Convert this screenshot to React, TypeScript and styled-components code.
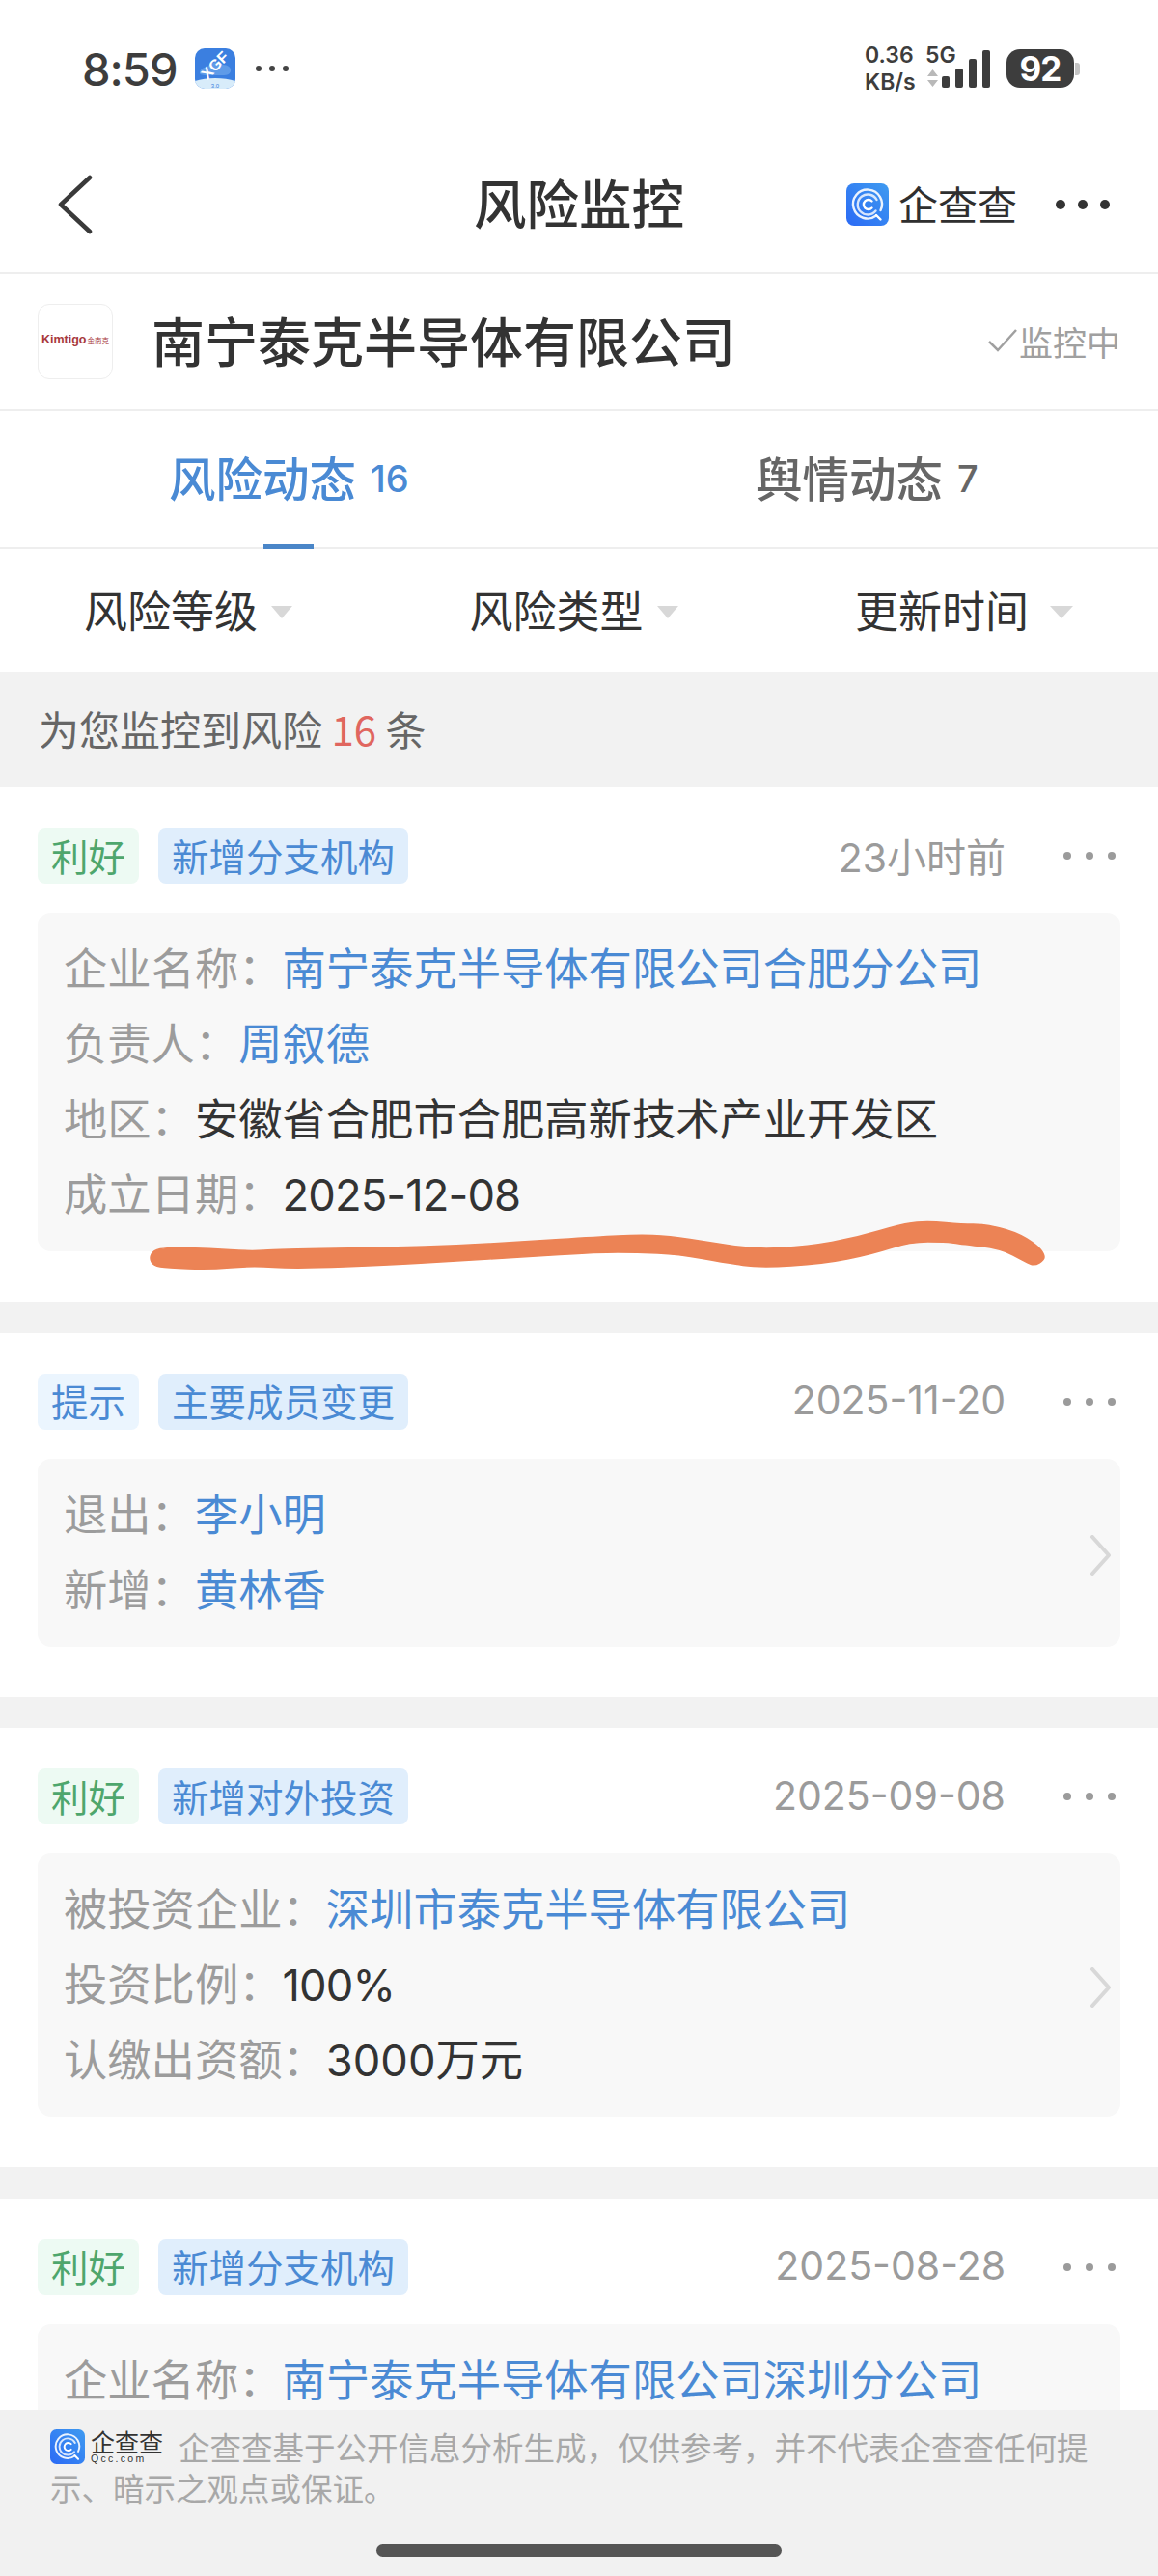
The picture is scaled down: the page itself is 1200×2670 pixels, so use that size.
import React from "react";
import styled, { createGlobalStyle } from "styled-components";

const cjk = `"Noto Sans CJK SC", "Noto Sans", sans-serif`;
const latin = `Inter, "Noto Sans CJK SC", sans-serif`;
const blue = "#4a8ad4";

const GlobalStyle = createGlobalStyle`
  html, body {
    margin: 0;
    padding: 0;
    background: #fff;
    font-family: ${cjk};
  }
  * {
    box-sizing: border-box;
  }
`;

const Page = styled.div`
  position: relative;
  width: 1200px;
  height: 2670px;
  overflow: hidden;
  background: #f2f2f2;
`;
const Header = styled.div`
  background: #fff;
`;

const StatusBar = styled.div`
  height: 142px;
  padding: 0 81px 0 85px;
  display: flex;
  align-items: center;
  color: #3d3d3d;
`;
const Clock = styled.div`
  font-family: Inter, sans-serif;
  font-size: 47px;
  font-weight: 500;
  letter-spacing: -1px;
  width: 117px;
`;
const StatusDots = styled.div`
  display: flex;
  gap: 8px;
  margin-left: 21px;
`;
const StatusDot = styled.span`
  width: 6px;
  height: 6px;
  border-radius: 50%;
  background: #444;
`;
const StatusRight = styled.div`
  margin-left: auto;
  display: flex;
  align-items: center;
`;
const Speed = styled.div`
  font-family: Inter, sans-serif;
  font-weight: 600;
  font-size: 23px;
  line-height: 28px;
  width: 63px;
  white-space: nowrap;
`;
const NetworkCol = styled.div`
  width: 17px;
  height: 56px;
  font-family: Inter, sans-serif;
  font-weight: 600;
  font-size: 23px;
  line-height: 28px;
  white-space: nowrap;
  svg {
    display: block;
    margin: 1px 0 0 2px;
  }
`;
const Battery = styled.div`
  margin-left: 17px;
  width: 70px;
  height: 40px;
  border-radius: 14px;
  background: #3d3d3d;
  color: #fff;
  font-family: Inter, sans-serif;
  font-weight: 700;
  font-size: 35px;
  letter-spacing: -1px;
  display: flex;
  align-items: center;
  justify-content: center;
`;
const BatteryTip = styled.div`
  width: 5px;
  height: 13px;
  margin-left: 1px;
  border-radius: 0 3px 3px 0;
  background: #c4c4c4;
`;

const NavBar = styled.div`
  height: 142px;
  padding: 0 50px;
  display: grid;
  grid-template-columns: 1fr auto 1fr;
  align-items: center;
  border-bottom: 2px solid #eeeeee;
`;
const BackIcon = styled.svg`
  margin-left: 10px;
`;
const NavTitle = styled.div`
  font-size: 54.5px;
  font-weight: 500;
  color: #333;
  line-height: 1;
  padding-bottom: 6px;
`;
const NavBrand = styled.div`
  display: flex;
  align-items: center;
  justify-content: flex-end;
`;
const BrandName = styled.div`
  margin-left: 10px;
  font-size: 41px;
  line-height: 1;
  color: #2f2f2f;
  padding-bottom: 3px;
`;
const MoreDots = styled.div<{ $size: number; $gap: number; $color: string }>`
  display: flex;
  gap: ${(p) => p.$gap}px;
  span {
    width: ${(p) => p.$size}px;
    height: ${(p) => p.$size}px;
    border-radius: 50%;
    background: ${(p) => p.$color};
  }
`;
const NavDots = styled(MoreDots)`
  margin-left: 40px;
`;

const CompanyRow = styled.div`
  height: 142px;
  padding: 0 39px;
  display: flex;
  align-items: center;
  border-bottom: 2px solid #eeeeee;
`;
const CompanyLogo = styled.div`
  width: 78px;
  height: 78px;
  border-radius: 12px;
  border: 1px solid #eeeeee;
  display: flex;
  align-items: baseline;
  justify-content: center;
  padding-top: 29px;
  color: #a8393c;
  font-family: "Liberation Sans", sans-serif;
  font-weight: 700;
  font-size: 12.5px;
  white-space: nowrap;
  small {
    font-family: ${cjk};
    font-size: 7.5px;
    font-weight: 400;
    margin-left: 1px;
  }
`;
const CompanyName = styled.div`
  margin-left: 40px;
  font-size: 55px;
  font-weight: 500;
  color: #333;
  line-height: 1;
  padding-bottom: 5px;
`;
const Monitoring = styled.div`
  margin-left: auto;
  display: flex;
  align-items: center;
  gap: 1px;
  font-size: 35px;
  color: #a0a0a0;
  padding-bottom: 2px;
`;

const Tabs = styled.div`
  height: 143px;
  display: flex;
  border-bottom: 2px solid #eeeeee;
`;
const Tab = styled.div<{ $active?: boolean }>`
  position: relative;
  display: flex;
  align-items: center;
  justify-content: flex-start;
  padding-left: ${(p) => (p.$active ? 175 : 183)}px;
  width: 600px;
  color: ${(p) => (p.$active ? blue : "#666")};
  font-size: 48.5px;
  font-weight: 500;
  padding-bottom: 6px;
  ${(p) =>
    p.$active &&
    `&::after {
      content: "";
      position: absolute;
      left: 273px;
      bottom: -2px;
      width: 52px;
      height: 5px;
      background: #4a86c8;
    }`}
`;
const TabCount = styled.span`
  margin: 4px 0 0 15px;
  font-family: ${latin};
  font-size: 38px;
`;

const Filters = styled.div`
  height: 128px;
  padding: 0 88px 0 87px;
  display: flex;
  align-items: center;
  justify-content: space-between;
`;
const Filter = styled.div<{ $gap: number }>`
  display: flex;
  align-items: center;
  gap: ${(p) => p.$gap}px;
  font-size: 45px;
  color: #333;
  padding-bottom: 4px;
`;
const Caret = styled.span<{ $half: number }>`
  width: 0;
  height: 0;
  margin-top: 7px;
  border-left: ${(p) => p.$half}px solid transparent;
  border-right: ${(p) => p.$half}px solid transparent;
  border-top: 13px solid #d8d8d8;
`;

const Summary = styled.div`
  height: 119px;
  padding: 0 40px 4px;
  display: flex;
  align-items: center;
  color: #666;
  font-size: 42px;
  white-space: pre;
  b {
    font-weight: 400;
    color: #e0665f;
  }
`;

const Card = styled.div`
  padding: 42px 39px 52px;
  background: #fff;
  & + & {
    margin-top: 32.5px;
  }
`;
const CardHead = styled.div`
  display: flex;
  align-items: center;
  height: 58px;
`;
const Tag = styled.div<{ $bg: string; $fg: string }>`
  height: 58px;
  padding: 0 14px 3px;
  margin-right: 20px;
  border-radius: 8px;
  background: ${(p) => p.$bg};
  color: ${(p) => p.$fg};
  font-size: 38.5px;
  display: flex;
  align-items: center;
`;
const Time = styled.div`
  margin-left: auto;
  font-family: ${latin};
  font-size: 41px;
  color: #9b9b9b;
  padding-bottom: 3px;
`;
const CardDots = styled(MoreDots)`
  margin-left: 60px;
  margin-right: 5px;
`;
const Panel = styled.div`
  margin-top: 30px;
  padding: 19px 27px 20px;
  border-radius: 14px;
  background: #f8f8f8;
  display: flex;
  align-items: center;
  justify-content: space-between;
`;
const Row = styled.div`
  height: 78px;
  line-height: 73px;
  font-size: 45.3px;
  white-space: nowrap;
`;
const Label = styled.span`
  color: #9c9c9c;
`;
const Value = styled.span<{ $link?: boolean; $tight?: boolean }>`
  font-family: ${latin};
  color: ${(p) => (p.$link ? blue : "#333")};
  letter-spacing: ${(p) => (p.$tight ? "-0.9px" : "normal")};
`;
const Chevron = styled.svg`
  margin: 6px -19px 0 0;
  flex: none;
`;

const Footer = styled.div`
  position: absolute;
  left: 0;
  right: 0;
  bottom: 0;
  height: 172px;
  padding: 17px 60px 0 52px;
  background: #f1f1f1;
  color: #a8a8a8;
  font-size: 32.5px;
  line-height: 42px;
`;
const FooterBrand = styled.span`
  display: inline-flex;
  align-items: center;
  vertical-align: top;
  height: 42px;
  margin-right: 16px;
`;
const FooterBrandText = styled.span`
  display: inline-flex;
  flex-direction: column;
  align-items: stretch;
  margin-left: 6px;
  color: #333;
  font-size: 25px;
  line-height: 25px;
  small {
    font-family: "Liberation Sans", sans-serif;
    font-size: 10.5px;
    line-height: 11px;
    letter-spacing: 2.3px;
  }
`;
const HomeBar = styled.div`
  position: absolute;
  left: 390px;
  top: 2637px;
  width: 420px;
  height: 13px;
  border-radius: 7px;
  background: #555;
`;
const Scribble = styled.svg`
  position: absolute;
  left: 0;
  top: 0;
  pointer-events: none;
`;

// hand-drawn underline, outline traced clockwise from the left cap
const scribblePoints: [number, number][] = [
  [155, 1304], [159, 1296], [173, 1293], [217, 1294], [260, 1297], [287, 1295], [407, 1293], [473, 1291],
  [540, 1287], [620, 1282], [660, 1280], [693, 1281], [737, 1288], [783, 1295], [837, 1292], [887, 1283],
  [937, 1268], [963, 1266], [997, 1269], [1020, 1269], [1053, 1277], [1075, 1291], [1082, 1300], [1082, 1306],
  [1072, 1312], [1063, 1308], [1037, 1294], [993, 1289], [980, 1287], [943, 1287], [903, 1300], [853, 1310],
  [787, 1314], [753, 1309], [703, 1300], [660, 1298], [620, 1298], [540, 1303], [473, 1307], [407, 1311],
  [307, 1315], [260, 1312], [217, 1316], [173, 1314], [159, 1312],
];

function smoothPath(points: [number, number][]) {
  const mid = (a: [number, number], b: [number, number]) => [(a[0] + b[0]) / 2, (a[1] + b[1]) / 2];
  const start = mid(points[points.length - 1], points[0]);
  let d = `M${start[0]} ${start[1]}`;
  points.forEach((p, i) => {
    const m = mid(p, points[(i + 1) % points.length]);
    d += `Q${p[0]} ${p[1]} ${m[0]} ${m[1]}`;
  });
  return d + "Z";
}

function QccLogo({ size }: { size: number }) {
  const id = `qcc-${size}`;
  return (
    <svg width={size} height={size} viewBox="0 0 44 44">
      <defs>
        <linearGradient id={id} x1="0" y1="1" x2="1" y2="0">
          <stop offset="0" stopColor="#2b6af5" />
          <stop offset="1" stopColor="#3f9bf0" />
        </linearGradient>
      </defs>
      <rect width="44" height="44" rx="8" fill={`url(#${id})`} />
      <g fill="none" stroke="#fff" strokeLinecap="round" strokeWidth="2.4">
        <path d="M31 33.5A15 15 0 1 1 35.5 28" opacity="0.9" />
        <path d="M31 33l4.5 4.5" />
        <path d="M30.5 28.5A10.5 10.5 0 1 1 31.5 17" opacity="0.8" />
        <path d="M26.5 25.5A5 5 0 1 1 26.5 18.5" />
      </g>
    </svg>
  );
}

function AppIcon() {
  return (
    <svg width="42" height="42" viewBox="0 0 42 42">
      <defs>
        <clipPath id="appclip">
          <rect width="42" height="42" rx="10" />
        </clipPath>
      </defs>
      <g clipPath="url(#appclip)">
        <rect width="42" height="42" fill="#3b7fe0" />
        <path d="M5 26c0-5 5-7 8-6 2-6 12-8 16-3 5 0 9 3 8 7-1 3-4 4-7 4H11c-3 0-6-1-6-2z" fill="#5f9be8" />
        <rect y="34" width="42" height="8" fill="#d8ecfa" />
        <path d="M0 34c12-4 30-4 42 0v2H0z" fill="#d8ecfa" />
        <text x="21" y="41" fontSize="6" textAnchor="middle" fill="#3b7fe0" fontFamily="Liberation Sans">
          3.0
        </text>
        <text
          x="21"
          y="23"
          fontSize="16"
          fontWeight="700"
          textAnchor="middle"
          fill="#fff"
          transform="rotate(-45 21 18)"
          fontFamily="Liberation Sans"
        >
          XGF
        </text>
      </g>
    </svg>
  );
}

function SignalBars() {
  return (
    <svg width="50" height="42" viewBox="0 0 50 42">
      <rect x="0" y="29" width="8" height="12" rx="2" fill="#3d3d3d" />
      <rect x="14" y="21" width="8" height="20" rx="2" fill="#3d3d3d" />
      <rect x="28" y="11" width="8" height="30" rx="2" fill="#3d3d3d" />
      <rect x="42" y="2" width="8" height="39" rx="2" fill="#3d3d3d" />
    </svg>
  );
}

function Dots() {
  return (
    <>
      <span />
      <span />
      <span />
    </>
  );
}

interface RowData {
  label: string;
  value: string;
  link?: boolean;
  tight?: boolean;
}
interface CardData {
  kind: "利好" | "提示";
  tag: string;
  time: string;
  arrow?: boolean;
  rows: RowData[];
}

const cards: CardData[] = [
  {
    kind: "利好",
    tag: "新增分支机构",
    time: "23小时前",
    rows: [
      { label: "企业名称：", value: "南宁泰克半导体有限公司合肥分公司", link: true },
      { label: "负责人：", value: "周叙德", link: true },
      { label: "地区：", value: "安徽省合肥市合肥高新技术产业开发区" },
      { label: "成立日期：", value: "2025-12-08", tight: true },
    ],
  },
  {
    kind: "提示",
    tag: "主要成员变更",
    time: "2025-11-20",
    arrow: true,
    rows: [
      { label: "退出：", value: "李小明", link: true },
      { label: "新增：", value: "黄林香", link: true },
    ],
  },
  {
    kind: "利好",
    tag: "新增对外投资",
    time: "2025-09-08",
    arrow: true,
    rows: [
      { label: "被投资企业：", value: "深圳市泰克半导体有限公司", link: true },
      { label: "投资比例：", value: "100%", tight: true },
      { label: "认缴出资额：", value: "3000万元" },
    ],
  },
  {
    kind: "利好",
    tag: "新增分支机构",
    time: "2025-08-28",
    rows: [{ label: "企业名称：", value: "南宁泰克半导体有限公司深圳分公司", link: true }],
  },
];

function RiskCard({ card }: { card: CardData }) {
  const good = card.kind === "利好";
  return (
    <Card>
      <CardHead>
        <Tag $bg={good ? "#edfaf3" : "#ebf5fe"} $fg={good ? "#4ea66d" : blue}>
          {card.kind}
        </Tag>
        <Tag $bg="#e0eefc" $fg={blue}>
          {card.tag}
        </Tag>
        <Time>{card.time}</Time>
        <CardDots $size={8} $gap={15} $color="#9b9b9b">
          <Dots />
        </CardDots>
      </CardHead>
      <Panel>
        <div>
          {card.rows.map((row) => (
            <Row key={row.label}>
              <Label>{row.label}</Label>
              <Value $link={row.link} $tight={row.tight}>
                {row.value}
              </Value>
            </Row>
          ))}
        </div>
        {card.arrow && (
          <Chevron width="24" height="42" viewBox="0 0 24 42">
            <path d="M3 2l17 19L3 40" fill="none" stroke="#d8d8d8" strokeWidth="4" strokeLinecap="round" strokeLinejoin="round" />
          </Chevron>
        )}
      </Panel>
    </Card>
  );
}

export default function App() {
  return (
    <Page>
      <GlobalStyle />
      <Header>
        <StatusBar>
          <Clock>8:59</Clock>
          <AppIcon />
          <StatusDots>
            <StatusDot />
            <StatusDot />
            <StatusDot />
          </StatusDots>
          <StatusRight>
            <Speed>
              0.36
              <br />
              KB/s
            </Speed>
            <NetworkCol>
              5G
              <svg width="11" height="18" viewBox="0 0 11 18">
                <path d="M5.5 0L11 7H0zM5.5 18L0 11h11z" fill="#b9b9b9" />
              </svg>
            </NetworkCol>
            <SignalBars />
            <Battery>92</Battery>
            <BatteryTip />
          </StatusRight>
        </StatusBar>

        <NavBar>
          <BackIcon width="36" height="62" viewBox="0 0 36 62">
            <path d="M33 3L3 31l30 28" fill="none" stroke="#3a3a3a" strokeWidth="4.5" strokeLinecap="round" strokeLinejoin="round" />
          </BackIcon>
          <NavTitle>风险监控</NavTitle>
          <NavBrand>
            <QccLogo size={44} />
            <BrandName>企查查</BrandName>
            <NavDots $size={10} $gap={13} $color="#333">
              <Dots />
            </NavDots>
          </NavBrand>
        </NavBar>

        <CompanyRow>
          <CompanyLogo>
            Kimtigo<small>金南克</small>
          </CompanyLogo>
          <CompanyName>南宁泰克半导体有限公司</CompanyName>
          <Monitoring>
            <svg width="32" height="26" viewBox="0 0 32 26">
              <path d="M2 14l9 9L30 2" fill="none" stroke="#a0a0a0" strokeWidth="2.5" />
            </svg>
            监控中
          </Monitoring>
        </CompanyRow>

        <Tabs>
          <Tab $active>
            风险动态<TabCount>16</TabCount>
          </Tab>
          <Tab>
            舆情动态<TabCount>7</TabCount>
          </Tab>
        </Tabs>

        <Filters>
          <Filter $gap={14}>
            风险等级
            <Caret $half={11} />
          </Filter>
          <Filter $gap={14}>
            风险类型
            <Caret $half={11} />
          </Filter>
          <Filter $gap={22}>
            更新时间
            <Caret $half={12.5} />
          </Filter>
        </Filters>
      </Header>

      <Summary>
        为您监控到风险 <b>16</b> 条
      </Summary>

      {cards.map((card) => (
        <RiskCard key={card.time} card={card} />
      ))}

      <Scribble width="1200" height="1400" viewBox="0 0 1200 1400">
        <path d={smoothPath(scribblePoints)} fill="#ec8355" stroke="#ec8355" strokeWidth="1.5" />
      </Scribble>

      <Footer>
        <FooterBrand>
          <QccLogo size={36} />
          <FooterBrandText>
            企查查
            <small>Qcc.com</small>
          </FooterBrandText>
        </FooterBrand>
        企查查基于公开信息分析生成，仅供参考，并不代表企查查任何提示、暗示之观点或保证。
      </Footer>
      <HomeBar />
    </Page>
  );
}
